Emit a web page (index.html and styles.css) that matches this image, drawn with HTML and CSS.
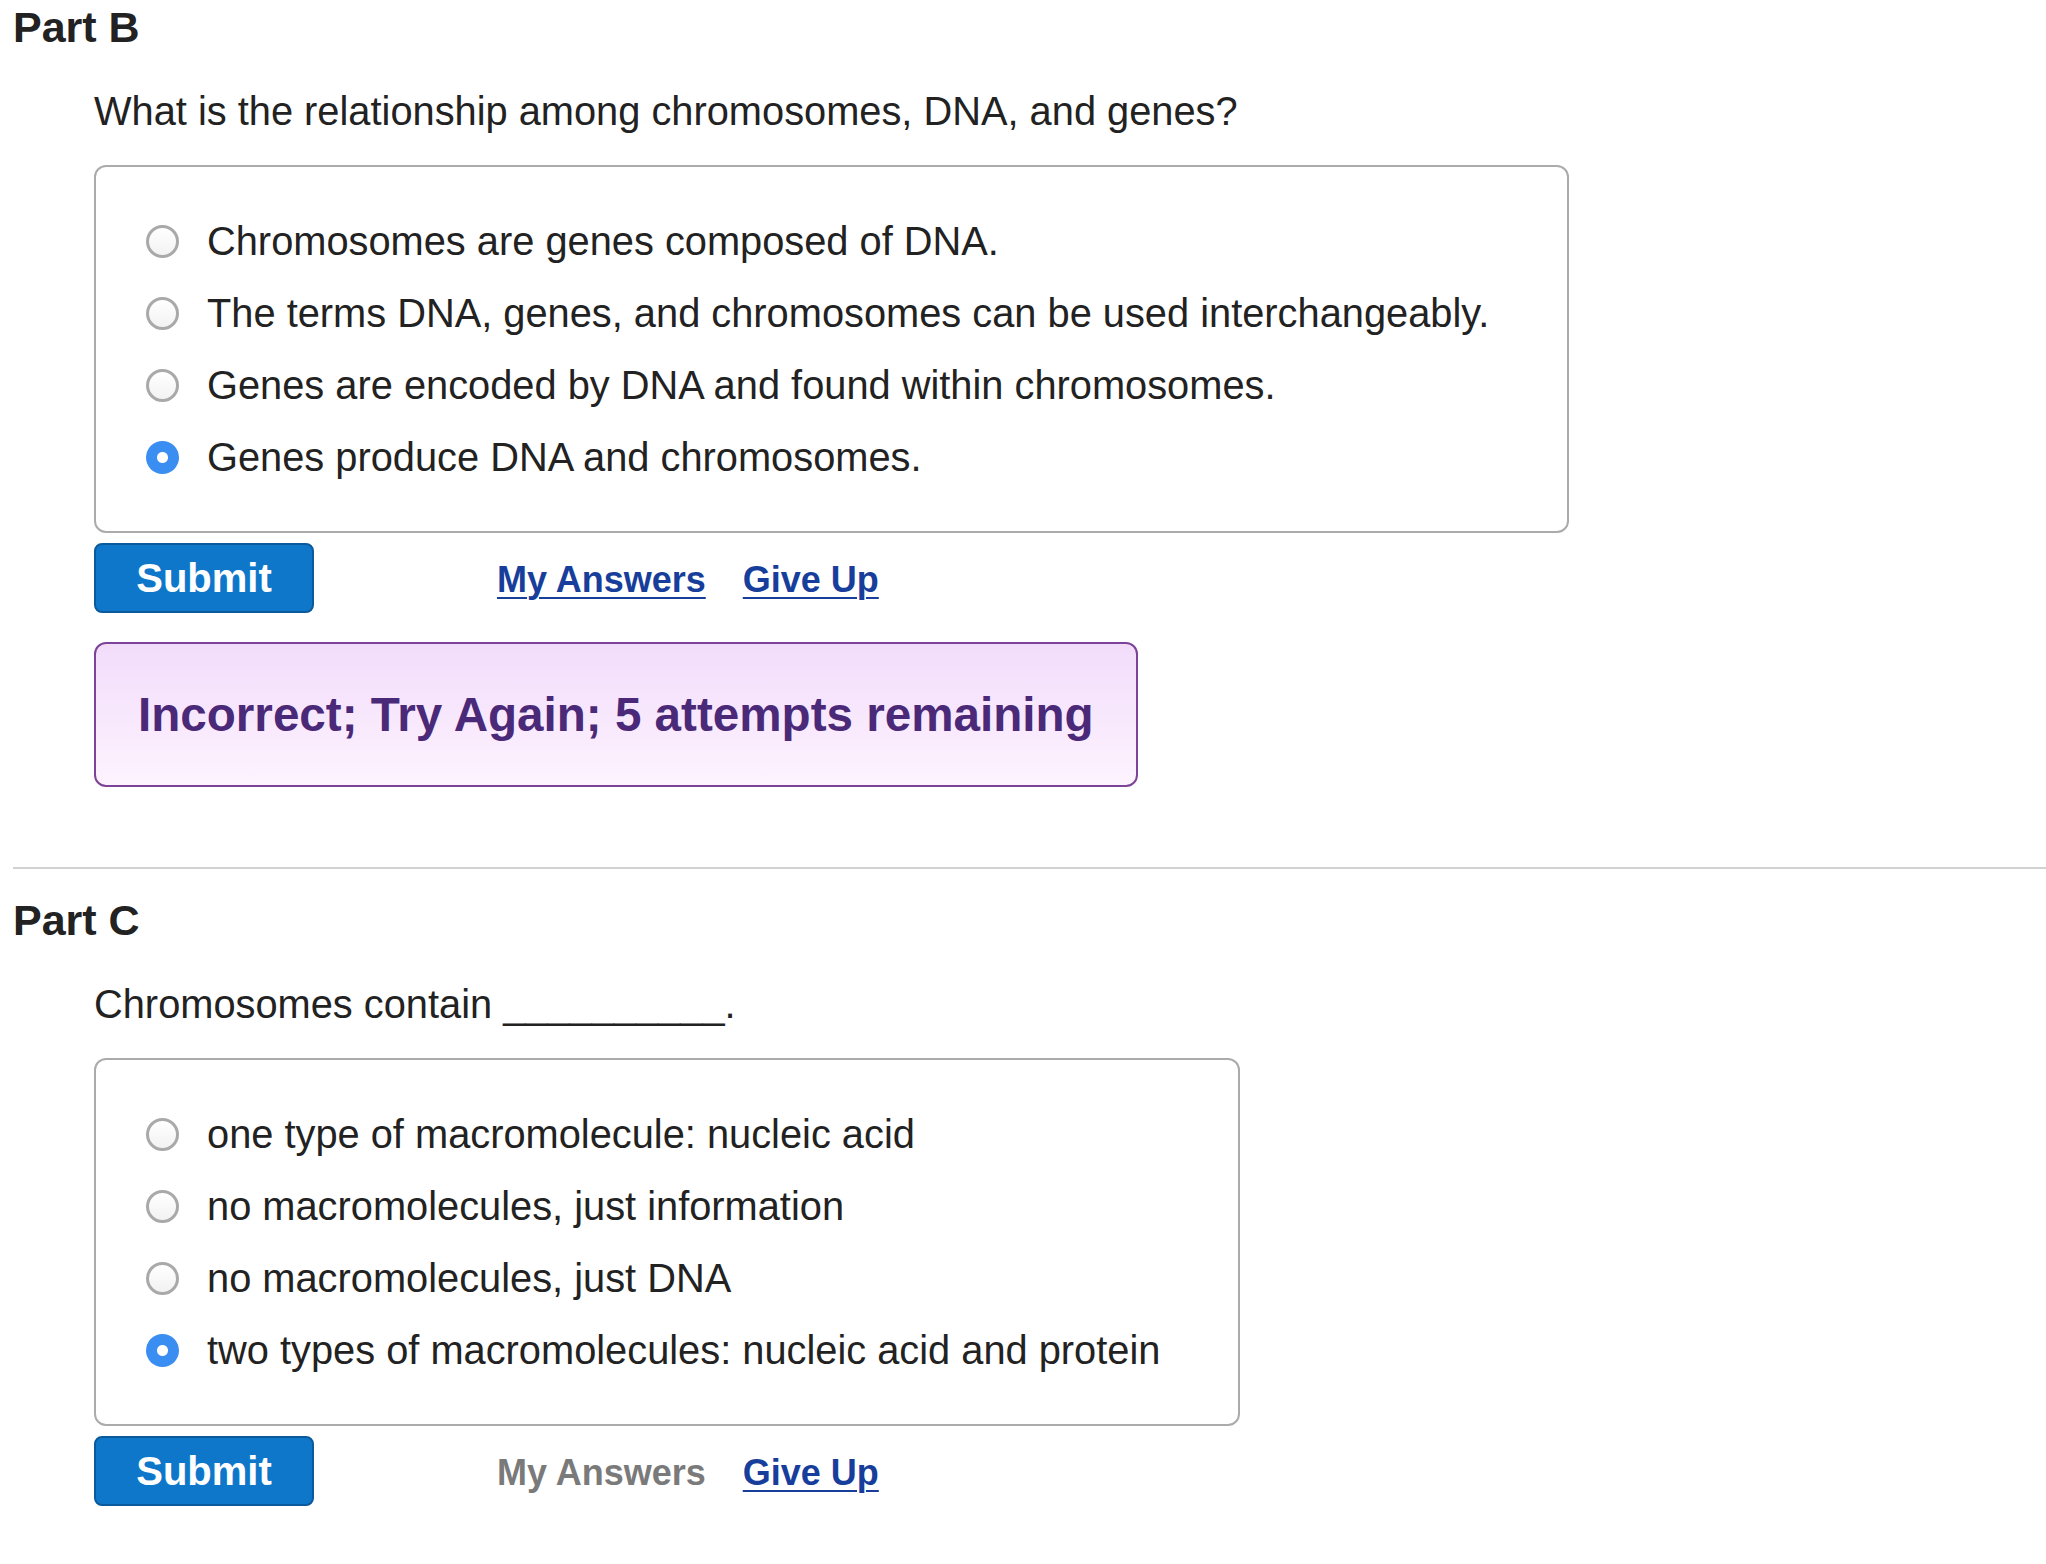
FILE: index.html
```html
<!DOCTYPE html>
<html lang="en">
<head>
  <meta charset="UTF-8" />
  <meta name="viewport" content="width=device-width, initial-scale=1.0" />
  <title>Chromosomes, DNA and Genes</title>
  <link rel="stylesheet" href="styles.css">
</head>
<body>
  <div class="page">
    <section class="part">
      <h2 class="part-title">Part B</h2>
      <div class="part-body">
        <p class="prompt">What is the relationship among chromosomes, DNA, and genes?</p>
        <div class="choices">
          <label class="choice"><input type="radio" name="partB"><span>Chromosomes are genes composed of DNA.</span></label>
          <label class="choice"><input type="radio" name="partB"><span>The terms DNA, genes, and chromosomes can be used interchangeably.</span></label>
          <label class="choice"><input type="radio" name="partB"><span>Genes are encoded by DNA and found within chromosomes.</span></label>
          <label class="choice"><input type="radio" name="partB" checked><span>Genes produce DNA and chromosomes.</span></label>
        </div>
        <div class="actions">
          <button class="submit">Submit</button>
          <a class="action-link" href="#">My Answers</a>
          <a class="action-link" href="#">Give Up</a>
        </div>
        <div class="feedback">Incorrect; Try Again; 5 attempts remaining</div>
      </div>
    </section>

    <hr class="part-divider">

    <section class="part">
      <h2 class="part-title">Part C</h2>
      <div class="part-body">
        <p class="prompt">Chromosomes contain __________.</p>
        <div class="choices">
          <label class="choice"><input type="radio" name="partC"><span>one type of macromolecule: nucleic acid</span></label>
          <label class="choice"><input type="radio" name="partC"><span>no macromolecules, just information</span></label>
          <label class="choice"><input type="radio" name="partC"><span>no macromolecules, just DNA</span></label>
          <label class="choice"><input type="radio" name="partC" checked><span>two types of macromolecules: nucleic acid and protein</span></label>
        </div>
        <div class="actions">
          <button class="submit">Submit</button>
          <span class="action-link disabled">My Answers</span>
          <a class="action-link" href="#">Give Up</a>
        </div>
      </div>
    </section>
  </div>
</body>
</html>
```

FILE: styles.css
```css
body {
  margin: 0;
  font-family: "Liberation Sans", Arial, Helvetica, sans-serif;
  background: #fff;
  color: #222;
}

.page {
  padding: 3px 0 0 13px;
}

.part-title {
  margin: 0;
  font-size: 43px;
  line-height: 48px;
  font-weight: 700;
}

.part-body {
  padding-left: 81px;
}

.prompt {
  margin: 36px 0 0;
  font-size: 39.8px;
  line-height: 48px;
}

/* answer list */
.choices {
  width: fit-content;
  margin-top: 30px;
  padding: 38px 78px 38px 50px;
  border: 2px solid #ababab;
  border-radius: 12px;
}

.choice {
  display: flex;
  align-items: center;
  gap: 28px;
  font-size: 39.8px;
  line-height: 72px;
  white-space: nowrap;
  cursor: pointer;
}

.choice input {
  appearance: none;
  -webkit-appearance: none;
  flex: none;
  width: 33px;
  height: 33px;
  margin: 0;
  border: 3px solid #a9a9a9;
  border-radius: 50%;
  background: linear-gradient(#fff, #f2f2f2);
  box-sizing: border-box;
}

.choice input:checked {
  border: none;
  background: radial-gradient(circle, #fff 0 5px, #3a8ef2 6px);
}

/* submit + links */
.actions {
  display: flex;
  align-items: baseline;
  margin-top: 10px;
}

.submit {
  width: 220px;
  height: 70px;
  padding: 0;
  font-family: inherit;
  font-size: 40px;
  font-weight: 700;
  color: #fff;
  background: #0f77ca;
  border: 2px solid #0b5a9c;
  border-radius: 8px;
  cursor: pointer;
}

.action-link {
  margin-left: 37px;
  font-size: 36px;
  font-weight: 700;
  color: #173e9b;
  text-decoration: underline;
  text-decoration-thickness: 2px;
  text-underline-offset: 5px;
}

.submit + .action-link {
  margin-left: 183px;
}

.action-link.disabled {
  color: #7a7a7a;
  text-decoration: none;
}

.feedback {
  width: fit-content;
  margin-top: 29px;
  padding: 42px;
  font-size: 47.6px;
  line-height: 57px;
  font-weight: 700;
  color: #4b2979;
  background: linear-gradient(#f2dcfb, #fdf3fe);
  border: 2px solid #7d4399;
  border-radius: 12px;
}

.part-divider {
  height: 2px;
  margin: 80px 0 27px;
  border: none;
  background: #d2d2d2;
}
```
